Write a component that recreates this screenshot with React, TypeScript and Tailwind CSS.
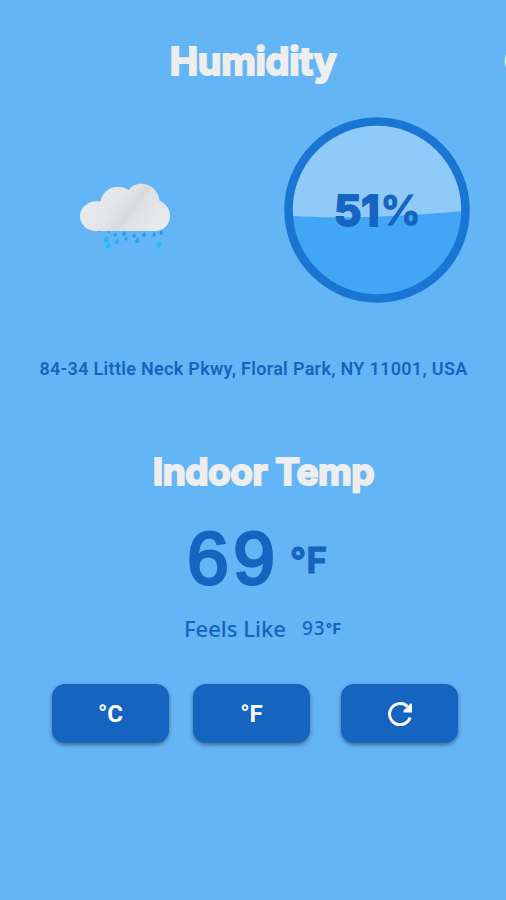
const ADDRESS = '84-34 Little Neck Pkwy, Floral Park, NY 11001, USA';

/* rain drops under the cloud: x, y, radius, colour */
const drops: [number, number, number, string][] = [
  [20, 49, 1.2, '#559fe0'],
  [30, 50, 1.4, '#4a9fe0'],
  [36, 53, 1.8, '#2b9ae6'],
  [45, 52, 1.9, '#2b98e6'],
  [55, 54, 1.8, '#2b9ae6'],
  [65, 53, 1.9, '#3a98e4'],
  [75, 53, 1.6, '#2595e6'],
  [82, 51, 1.7, '#3388de'],
  [27, 58, 2.5, '#19b9f2'],
  [38, 60, 2.2, '#20b4f4'],
  [47, 57, 1.5, '#279cea'],
  [58, 59, 2.2, '#26a9ee'],
  [29, 64, 2.5, '#18c2f5'],
  [80, 63, 2.5, '#18c2f5'],
];

function RainCloud() {
  return (
    <svg viewBox="0 0 92 70" className="h-[70px] w-[92px]">
      <defs>
        <linearGradient id="cloud" x1="0" y1="0.2" x2="1" y2="0.6">
          <stop offset="0" stopColor="#ececee" />
          <stop offset="0.42" stopColor="#e3e5e9" />
          <stop offset="0.62" stopColor="#d7dadf" />
          <stop offset="0.68" stopColor="#dfe1e5" />
          <stop offset="1" stopColor="#e8e9ec" />
        </linearGradient>
      </defs>
      {drops.map(([x, y, r, color]) => (
        <path
          key={`${x}-${y}`}
          d={`M${x + r * 0.4} ${y - r * 1.8}L${x + r} ${y}A${r} ${r} 0 1 1 ${x - r} ${y}Z`}
          fill={color}
        />
      ))}
      <path
        d="M16 49A15 15 0 0 1 1 34C1 24 11 17.500 21.500 19.500C24 5 40 1 50 8C56 -2.500 78 -0.500 80.500 18.500C87 21.500 91 27 91 34C91 42 85 49 76 49Z"
        fill="url(#cloud)"
      />
    </svg>
  );
}

function RefreshIcon() {
  return (
    <svg viewBox="0 0 24 24" className="h-[24px] w-[24px]" fill="none">
      <path d="M22.200 15.500A10.600 10.600 0 1 1 19.400 4.400" stroke="#fff" strokeWidth="2.900" />
      <path d="M24 1.500V10.500H15.500V8.500L22.500 1.500Z" fill="#fff" />
    </svg>
  );
}

function HumidityGauge({ value }: { value: number }) {
  return (
    <div className="relative flex h-[186px] w-[186px] items-center justify-center">
      <svg viewBox="0 0 186 186" className="absolute inset-0">
        <clipPath id="gauge">
          <circle cx="93" cy="93" r="88" />
        </clipPath>
        <circle cx="93" cy="93" r="88" fill="#90caf9" />
        <path
          d="M0 98.500C50 102 105 100.500 186 93.500V186H0Z"
          fill="#42a5f5"
          clipPath="url(#gauge)"
        />
        <circle cx="93" cy="93" r="88.500" fill="none" stroke="#1976d2" strokeWidth="8.500" />
      </svg>
      <div className="relative -left-[1px] flex items-center leading-none">
        <span className="text-[43px] font-bold [-webkit-text-stroke:2px_#1565c0]">
          {value}
        </span>
        <span className="text-[41px] font-semibold tracking-[-3px] [-webkit-text-stroke:1px_#1565c0]">
          %
        </span>
      </div>
    </div>
  );
}

function Button({ children }: { children: React.ReactNode }) {
  return (
    <button className="flex h-[59px] w-[117px] items-center justify-center rounded-[13px] bg-[#1565c0] font-[Roboto,sans-serif] text-[24px] font-bold text-white shadow-[0_2px_4px_rgba(0,0,0,0.4)]">
      {children}
    </button>
  );
}

export default function App() {
  return (
    <div className="flex h-[900px] w-[506px] flex-col overflow-hidden bg-[#64b5f6] font-[Inter,sans-serif] text-[#1565c0]">
      <header className="flex h-[117px] pt-[37px] text-[38px] leading-[48px] font-bold whitespace-nowrap text-[#eeeeee] [-webkit-text-stroke:2px_#eeeeee]">
        <h1 className="w-[504px] shrink-0 pl-[2px] text-center tracking-[-0.3px]">Humidity</h1>
        <span className="shrink-0">C</span>
      </header>

      <section className="flex h-[186px] items-center justify-between pr-[36px] pl-[79px]">
        <div className="pt-[14px]">
          <RainCloud />
        </div>
        <HumidityGauge value={51} />
      </section>

      <p className="mt-[54px] pl-[1px] text-center font-[Roboto,sans-serif] text-[18px] leading-6 font-semibold tracking-[0.31px] whitespace-nowrap">
        {ADDRESS}
      </p>

      <h2 className="mt-[67px] pl-[21px] text-center text-[37px] leading-[48px] font-bold tracking-[-0.5px] text-[#eeeeee] [-webkit-text-stroke:2px_#eeeeee]">
        Indoor Temp
      </h2>

      <div className="mt-[21px] flex h-[84px] items-center pl-[187px]">
        <span className="w-[103px] pb-[2px] font-['Liberation_Sans',sans-serif] text-[75px] leading-[84px] tracking-[4.500px] [-webkit-text-stroke:3px_#1565c0]">
          69
        </span>
        <span className="pt-[2px] text-[35px] leading-none font-bold tracking-[0.500px] [-webkit-text-stroke:1px_#1565c0]">
          °F
        </span>
      </div>

      <div className="mt-[11px] flex h-[32px] items-center pl-[184px] font-['Noto_Sans',sans-serif]">
        <span className="w-[118px] text-[22px] font-medium">Feels Like</span>
        <span className="text-[19px] font-medium tracking-[1px]">93</span>
        <span className="pt-[1px] font-[Inter,sans-serif] text-[14px] font-extrabold tracking-[0.500px]">°F</span>
      </div>

      <div className="mt-[40px] flex pl-[52px]">
        <Button>°C</Button>
        <div className="mr-[31px] ml-[24px]">
          <Button>°F</Button>
        </div>
        <Button>
          <RefreshIcon />
        </Button>
      </div>
    </div>
  );
}
